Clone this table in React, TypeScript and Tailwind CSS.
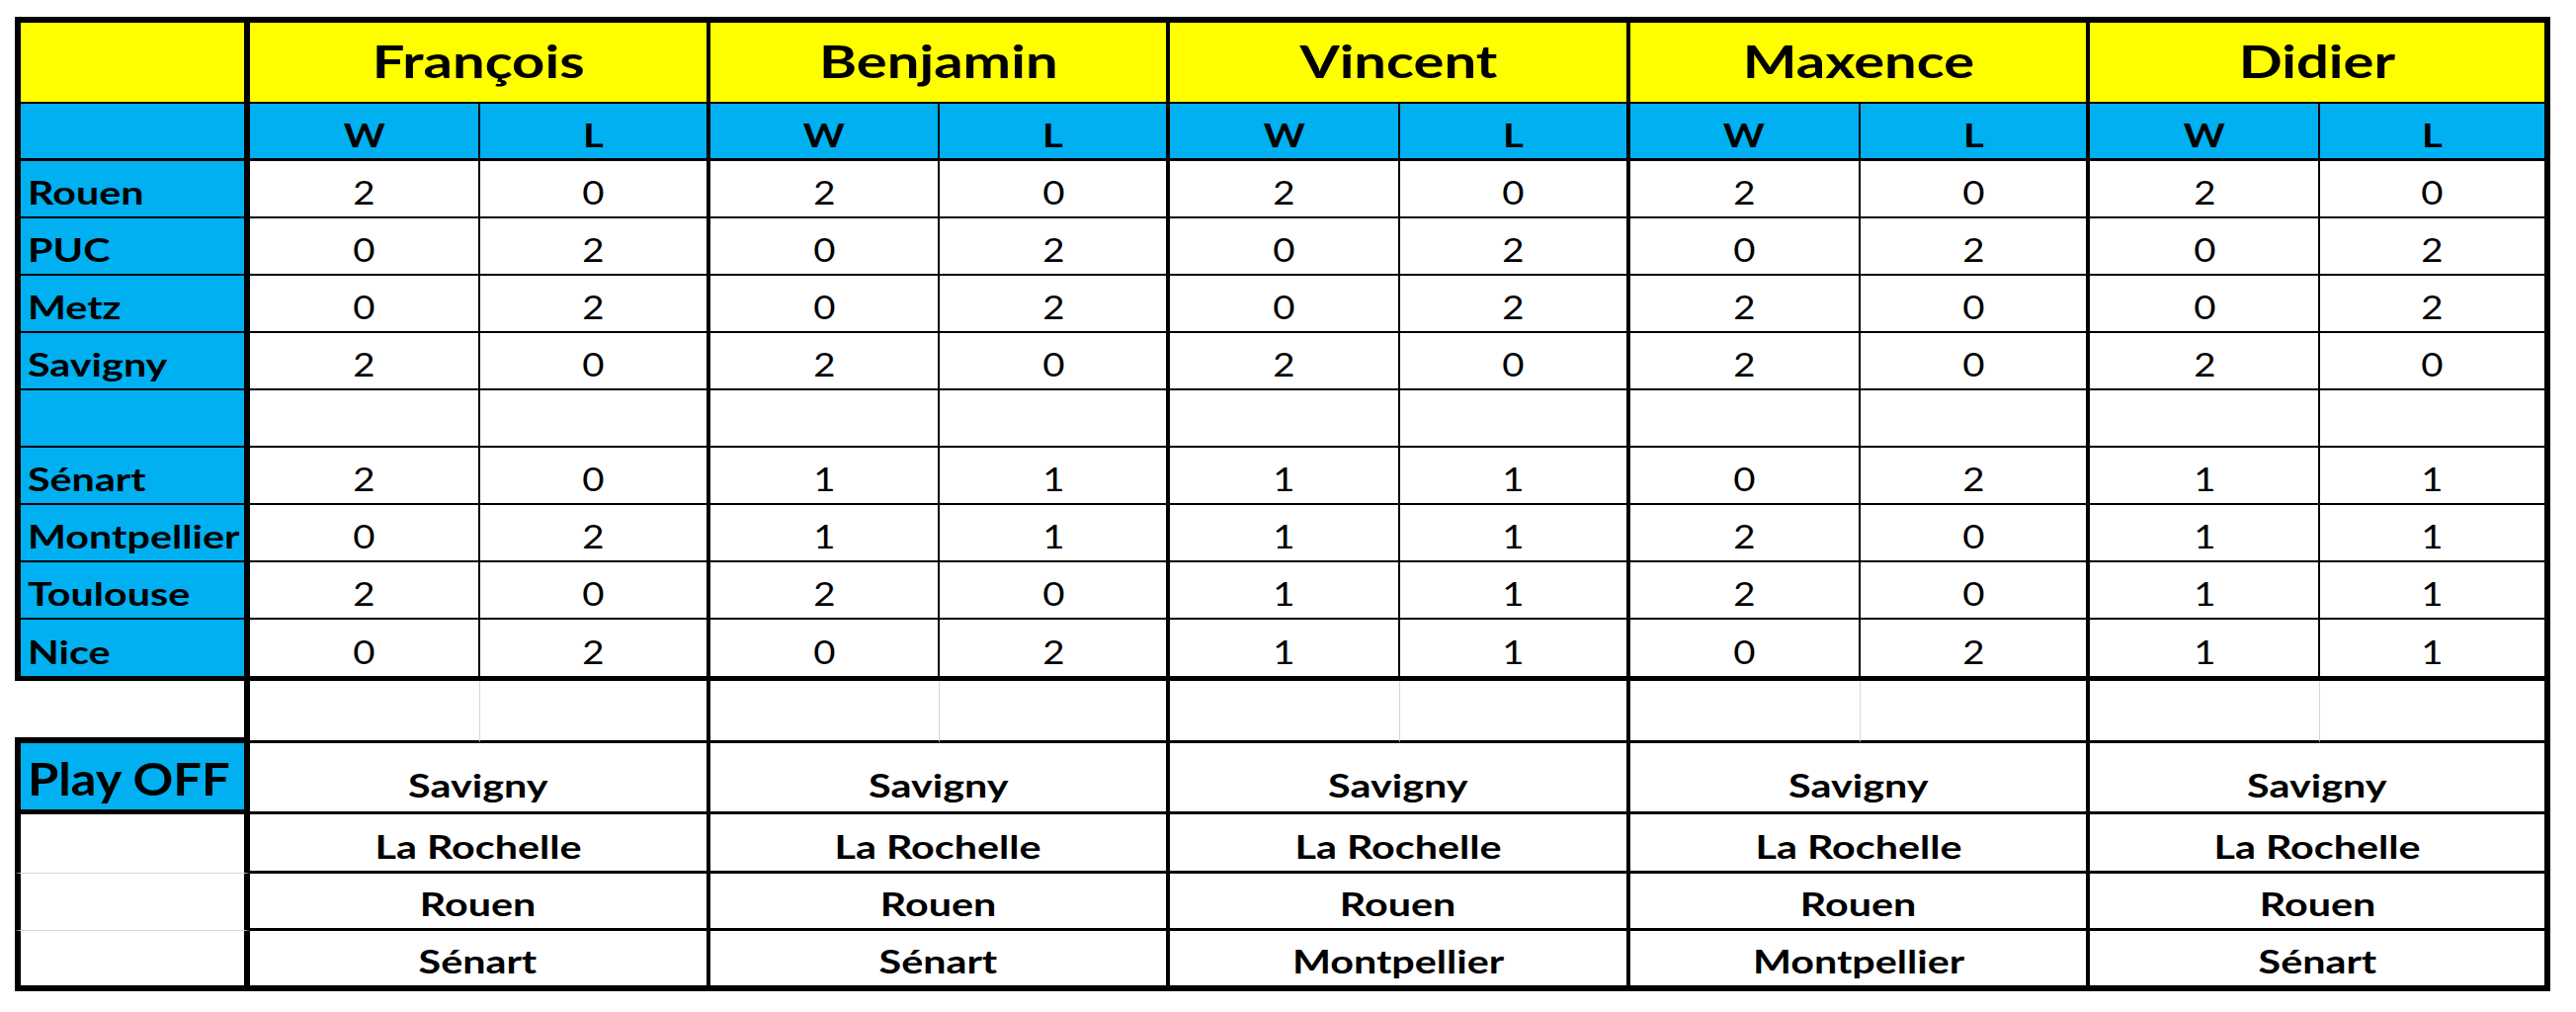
const TEAMS = ["Rouen", "PUC", "Metz", "Savigny", "", "Sénart", "Montpellier", "Toulouse", "Nice"];

const PLAYERS = [
  {
    name: "François",
    scores: ["20", "02", "02", "20", "", "20", "02", "20", "02"],
    playoff: ["Savigny", "La Rochelle", "Rouen", "Sénart"],
  },
  {
    name: "Benjamin",
    scores: ["20", "02", "02", "20", "", "11", "11", "20", "02"],
    playoff: ["Savigny", "La Rochelle", "Rouen", "Sénart"],
  },
  {
    name: "Vincent",
    scores: ["20", "02", "02", "20", "", "11", "11", "11", "11"],
    playoff: ["Savigny", "La Rochelle", "Rouen", "Montpellier"],
  },
  {
    name: "Maxence",
    scores: ["20", "02", "20", "20", "", "02", "20", "20", "02"],
    playoff: ["Savigny", "La Rochelle", "Rouen", "Montpellier"],
  },
  {
    name: "Didier",
    scores: ["20", "02", "02", "20", "", "11", "11", "11", "11"],
    playoff: ["Savigny", "La Rochelle", "Rouen", "Sénart"],
  },
];

const App = () => {
  return (
    <div className="min-h-screen bg-white pt-[17px] pl-[15px] font-['Lato',sans-serif] text-black">
      <div className="grid w-[2566px] grid-cols-[238px_repeat(10,minmax(0,1fr))] grid-rows-[88px_58px_repeat(8,58px)_62px_63px_72px_60px_58px_61px]">
        {/* Names row */}
        <div className="bg-[#ffff00] border-t-[6px] border-l-[6px] border-r-[6px] border-b-2 border-black" />
        {PLAYERS.map((p, i) => (
          <div
            key={p.name}
            className={`col-span-2 flex items-end justify-center bg-[#ffff00] border-t-[6px] border-b-2 border-black pb-[18px] ${
              i === 4 ? "border-r-[6px]" : "border-r-4"
            }`}
          >
            <span className="inline-block scale-x-[1.26] text-[46px] font-bold leading-none">{p.name}</span>
          </div>
        ))}

        {/* W / L row */}
        <div className="bg-[#00b0f0] border-l-[6px] border-r-[6px] border-b-[3px] border-black" />
        {PLAYERS.map((p, i) => (
          <div key={p.name} className="contents">
            <div className="flex items-end justify-center bg-[#00b0f0] border-r-2 border-b-[3px] border-black pb-[7px]">
              <span className="inline-block scale-x-[1.25] text-[32px] font-bold leading-none">W</span>
            </div>
            <div
              className={`flex items-end justify-center bg-[#00b0f0] border-b-[3px] border-black pb-[7px] ${
                i === 4 ? "border-r-[6px]" : "border-r-4"
              }`}
            >
              <span className="inline-block scale-x-[1.25] text-[32px] font-bold leading-none">L</span>
            </div>
          </div>
        ))}

        {/* Team rows */}
        {TEAMS.map((team, r) => {
          const last = r === TEAMS.length - 1;
          return (
            <div key={r} className="contents">
              <div
                className={`flex items-end bg-[#00b0f0] border-l-[6px] border-r-[6px] border-black pl-[7px] pb-[8px] ${
                  last ? "border-b-[5px]" : "border-b-2"
                }`}
              >
                <span className="inline-block origin-left scale-x-[1.29] text-[32px] font-bold leading-none whitespace-nowrap">
                  {team}
                </span>
              </div>
              {PLAYERS.map((p, i) => (
                <div key={p.name} className="contents">
                  <div
                    className={`flex items-end justify-center bg-white border-r-2 border-black pb-[8px] ${
                      last ? "border-b-[5px]" : "border-b-2"
                    }`}
                  >
                    <span className="inline-block scale-x-[1.2] text-[32px] leading-none">{p.scores[r][0]}</span>
                  </div>
                  <div
                    className={`flex items-end justify-center bg-white border-black pb-[8px] ${
                      last ? "border-b-[5px]" : "border-b-2"
                    } ${i === 4 ? "border-r-[6px]" : "border-r-4"}`}
                  >
                    <span className="inline-block scale-x-[1.2] text-[32px] leading-none">{p.scores[r][1]}</span>
                  </div>
                </div>
              ))}
            </div>
          );
        })}

        {/* Spacer row */}
        <div className="bg-white border-r-[6px] border-b-[6px] border-black" />
        {PLAYERS.map((p, i) => (
          <div key={p.name} className="contents">
            <div className="bg-white border-r border-r-[#d0d7e5] border-b-[3px] border-b-black" />
            <div
              className={`bg-white border-b-[3px] border-black ${i === 4 ? "border-r-[6px]" : "border-r-4"}`}
            />
          </div>
        ))}

        {/* Play OFF */}
        {[0, 1, 2, 3].map((k) => {
          const first = k === 0;
          const lastRow = k === 3;
          return (
            <div key={k} className="contents">
              {first ? (
                <div className="flex items-end bg-[#00b0f0] border-l-[6px] border-r-[6px] border-b-[5px] border-black pl-[7px] pb-[8px]">
                  <span className="inline-block origin-left scale-x-[1.1] text-[46px] font-bold leading-none whitespace-nowrap">
                    Play OFF
                  </span>
                </div>
              ) : (
                <div
                  className={`bg-white border-l-[6px] border-r-[6px] border-black ${
                    lastRow ? "border-b-[6px]" : "border-b border-b-[#d0d7e5]"
                  }`}
                />
              )}
              {PLAYERS.map((p, i) => (
                <div
                  key={p.name}
                  className={`col-span-2 flex items-end justify-center bg-white border-black ${
                    first ? "pb-[10px]" : "pb-[8px]"
                  } ${lastRow ? "border-b-[6px]" : "border-b-[3px]"} ${
                    i === 4 ? "border-r-[6px]" : "border-r-4"
                  }`}
                >
                  <span className="inline-block scale-x-[1.29] text-[32px] font-bold leading-none whitespace-nowrap">
                    {p.playoff[k]}
                  </span>
                </div>
              ))}
            </div>
          );
        })}
      </div>
    </div>
  );
};

export default App;
